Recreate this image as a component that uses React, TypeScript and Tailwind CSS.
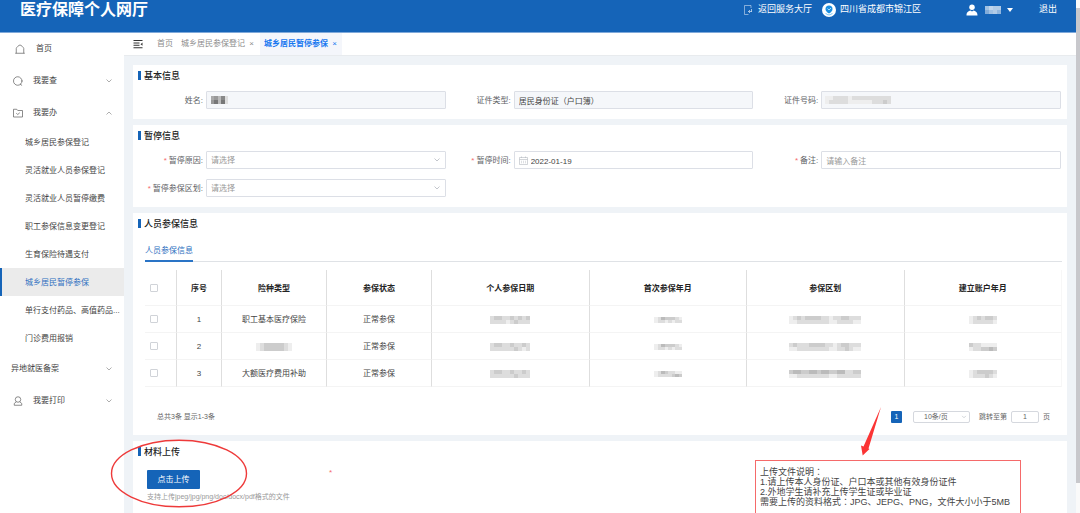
import { useState, type ReactNode } from 'react'

const COVERAGE = [
  { id: 1, type: '职工基本医疗保险', status: '正常参保', date: ['dccddcdcdc', 'ddddedcddd'], first: ['edbcccde', 'eddededd'], area: ['edcdccccddeddccddd', 'eeddddddddeeddddee'], account: ['edcdccd', 'eddddde'] },
  { id: 2, type: '', status: '正常参保', date: ['dccddcddcd', 'ddddddcded'], first: ['edbcccde', 'eddededd'], area: ['dcdddccccddedccddd', 'eeddddddddeeddcdee'], account: ['cddeeee', 'eddccbc'] },
  { id: 3, type: '大额医疗费用补助', status: '正常参保', date: ['dccddcddcd', 'ddddddcddd'], first: ['edbcddee', 'eddddcbc'], area: ['cbbccbbcbbccbbddcc', 'eeddddddddeedddddd'], account: ['edccccd', 'edddcde'] },
]

const SUB_MENU = [
  '城乡居民参保登记',
  '灵活就业人员参保登记',
  '灵活就业人员暂停缴费',
  '职工参保信息变更登记',
  '生育保险待遇支付',
  '城乡居民暂停参保',
  '单行支付药品、高值药品...',
  '门诊费用报销',
]

const ACTIVE_MENU = '城乡居民暂停参保'

// privacy mosaic: each character is the grey level of one block
function Mosaic({ rows, className, tint }: { rows: string[]; className?: string; tint?: string }) {
  const cols = rows[0].length
  return (
    <svg className={className} viewBox={`0 0 ${cols} ${rows.length}`} preserveAspectRatio="none" shapeRendering="crispEdges" aria-hidden="true">
      {rows.map((row, y) =>
        row.split('').map((c, x) => (
          <rect key={`${x}-${y}`} x={x} y={y} width="1" height="1" fill={tint || `#${c}${c}${c}`} fillOpacity={tint ? parseInt(c, 16) / 15 : 1} />
        ))
      )}
    </svg>
  )
}

function Chevron({ className, up }: { className?: string; up?: boolean }) {
  return (
    <svg className={className} viewBox="0 0 8 8" fill="none" stroke="currentColor" strokeWidth={0.8}>
      <path d={up ? 'M1.5 5.5 L4 3 L6.5 5.5' : 'M1.5 2.5 L4 5 L6.5 2.5'} />
    </svg>
  )
}

function HomeIcon() {
  return (
    <svg className="w-[10px] h-[10px]" viewBox="0 0 20 20" fill="none" stroke="currentColor" strokeWidth={1.5} strokeLinejoin="round">
      <path d="M0.500 18.500 H19.500 M2.500 18.500 V9 C2.500 7 8 2 10 2 C12 2 17.500 7 17.500 9 V18.500" />
    </svg>
  )
}

function SearchIcon() {
  return (
    <svg className="w-[10px] h-[10px]" viewBox="0 0 20 20" fill="none" stroke="currentColor" strokeWidth={1.5} strokeLinecap="round">
      <circle cx="9.500" cy="10" r="8.500" />
      <path d="M14.500 16.500 L17.500 18.500" />
    </svg>
  )
}

function FolderIcon() {
  return (
    <svg className="w-[10px] h-[10px]" viewBox="0 0 20 20" fill="none" stroke="currentColor" strokeWidth={1.5} strokeLinejoin="round">
      <path d="M1 2.500 H7.500 L9.500 5 H19 V18 H1 Z" />
      <path d="M6.500 10.500 L9.500 13 L13.500 9.500" />
    </svg>
  )
}

function PersonIcon() {
  return (
    <svg className="w-[10px] h-[10px]" viewBox="0 0 20 20" fill="none" stroke="currentColor" strokeWidth={1.5} strokeLinejoin="round">
      <circle cx="10" cy="7" r="5.500" />
      <path d="M6.500 11.500 L2.500 15 V18.500 H17.500 V15 L13.500 11.500" />
    </svg>
  )
}

function MenuGroup({ icon, label, open }: { icon?: ReactNode; label: string; open?: boolean }) {
  return (
    <button type="button" aria-expanded={!!open} className={`flex h-8 w-full items-center gap-[10px] pr-[11px] pt-[2px] text-left ${icon ? 'pl-[13px]' : 'pl-[11px]'}`}>
      {icon && <span className="text-[#666]">{icon}</span>}
      <span className="flex-1">{label}</span>
      <Chevron up={open} className="w-2 h-2 text-[#999]" />
    </button>
  )
}

function Sidebar() {
  return (
    <nav className="w-[124px] shrink-0 bg-white text-[8px] leading-3 text-[#444]">
      <a href="#home" className="flex h-8 items-center gap-[11px] pl-[15px] pt-[2px]">
        <span className="text-[#666]"><HomeIcon /></span>
        首页
      </a>
      <MenuGroup icon={<SearchIcon />} label="我要查" />
      <MenuGroup icon={<FolderIcon />} label="我要办" open />
      <ul>
        {SUB_MENU.map((item) => (
          <li key={item}>
            <a
              href="#menu"
              className={`block h-7 whitespace-nowrap border-l-2 pl-[23px] leading-[30px] ${item === ACTIVE_MENU ? 'border-[#1564b8] bg-[#ebebeb] text-[#2e6fc0]' : 'border-transparent'}`}
            >
              {item}
            </a>
          </li>
        ))}
      </ul>
      <MenuGroup label="异地就医备案" />
      <MenuGroup icon={<PersonIcon />} label="我要打印" />
    </nav>
  )
}

function Header() {
  return (
    <header className="relative z-10 h-8 shrink-0 bg-[#1564b8] text-white shadow-[0_1px_0_#7fa9da]">
      <div className="flex h-5 items-center pl-5 pr-[19px] text-[9px]">
        <h1 className="flex-1 text-[16px] leading-5 font-bold">医疗保障个人网厅</h1>
        <a href="#hall" className="flex items-center gap-[6px]">
          <svg className="w-2 h-[10px]" viewBox="0 0 16 20" fill="none" stroke="currentColor" strokeWidth={1.2}>
            <path d="M14 6 V1 H1 V19 H9" opacity="0.8" />
            <path d="M15 8 V14 M12 10 L9 13 L12 16 M9 13 H15" />
          </svg>
          返回服务大厅
        </a>
        <div className="ml-[10px] flex items-center gap-1">
          <svg className="w-[14px] h-[14px]" viewBox="0 0 28 28">
            <circle cx="14" cy="14" r="14" fill="#fff" />
            <path d="M14 21 C9 18 7 15 7 12 A7 7 0 0 1 21 12 C21 15 19 18 14 21 Z" fill="#1c8fe0" />
            <path d="M11 11 L14 14 L18 10" fill="none" stroke="#a6dcff" strokeWidth="2" />
            <path d="M7 20 C10 25 18 25 21 20" fill="none" stroke="#52b5f2" strokeWidth="1.5" />
          </svg>
          四川省成都市锦江区
        </div>
        <button type="button" aria-label="用户" className="ml-[45px] flex items-center">
          <svg className="w-3 h-3" viewBox="0 0 24 24" fill="currentColor">
            <circle cx="12" cy="6.500" r="5.500" />
            <path d="M1 23 C1 16 5 14.500 9 13 L12 15 L15 13 C19 14.500 23 16 23 23 Z" />
          </svg>
          <Mosaic rows={['9baa', '79a8']} tint="#ffffff" className="ml-[7px] w-4 h-2" />
          <svg className="ml-[6px] w-[6px] h-[4px]" viewBox="0 0 6 4" fill="currentColor">
            <path d="M0 0 H6 L3 4 Z" />
          </svg>
        </button>
        <a href="#logout" className="ml-[26px]">退出</a>
      </div>
    </header>
  )
}

function TabBar() {
  return (
    <div className="flex h-6 items-center border-b border-[#e8ebee] bg-white pl-[9px] text-[8px] text-[#8c8c8c]">
      <button type="button" aria-label="收起菜单" className="text-[#333]">
        <svg className="w-[10px] h-[10px]" viewBox="0 0 20 20" fill="none" stroke="currentColor" strokeWidth={2}>
          <path d="M1 3 H19 M1 8 H13 M1 12.500 H13 M1 17.500 H19" />
          <path d="M19 7 V13.500 L15 10.250 Z" fill="currentColor" stroke="none" />
        </svg>
      </button>
      <a href="#home" className="ml-[14px]">首页</a>
      <a href="#register" className="ml-2">城乡居民参保登记</a>
      <button type="button" aria-label="关闭" className="ml-[3px] w-[7px]">×</button>
      <div className="ml-[5px] flex h-full items-center gap-[3px] bg-[#f4f6fb] px-1 text-[#1677f0]">
        <a href="#suspend" className="font-bold">城乡居民暂停参保</a>
        <button type="button" aria-label="关闭" className="w-[7px]">×</button>
      </div>
    </div>
  )
}

function Card({ title, className, children }: { title: string; className?: string; children: ReactNode }) {
  return (
    <section className={`bg-white ${className || ''}`}>
      <h2 className="flex h-[21px] items-center gap-[3px] pl-[5px] text-[9px] font-medium text-[#222]">
        <span className="w-[3px] h-[9px] bg-[#1564b8]" />
        {title}
      </h2>
      {children}
    </section>
  )
}

function Field({ id, label, required, children }: { id: string; label: string; required?: boolean; children: ReactNode }) {
  return (
    <div className="flex h-[18px] items-center">
      <label htmlFor={id} className="w-[68px] shrink-0 pr-[3px] pt-[2px] text-right text-[#606266]">
        {required && <span className="mr-[2px] text-[#f56c6c]">*</span>}
        {label}:
      </label>
      <div className="relative h-full flex-1">{children}</div>
    </div>
  )
}

const inputClass = 'block h-full w-full appearance-none rounded-[1px] border border-[#dcdfe6] bg-white px-1 pt-[2px] text-[#444] outline-none placeholder:text-[#999]'
const disabledClass = 'block h-full w-full rounded-[1px] border border-[#dcdfe6] bg-[#f5f7fa] px-1 text-[#444]'

function EmptySelect({ id }: { id: string }) {
  return (
    <>
      <select id={id} defaultValue="" className={`${inputClass} text-[#999]`}>
        <option value="">请选择</option>
      </select>
      <Chevron className="pointer-events-none absolute right-[5px] top-[5px] w-2 h-2 text-[#b4b8bf]" />
    </>
  )
}

function Checkbox({ label }: { label: string }) {
  return (
    <input type="checkbox" aria-label={label} className="block w-2 h-2 appearance-none rounded-[1px] border border-[#d0d3d8] bg-white checked:bg-[#1564b8]" />
  )
}

function CoverageTable() {
  const box = 'border-b border-r border-b-[#f4f4f4] border-r-[#dedede] last:border-r-[#f7f7f7]'
  const cell = `${box} px-0 pb-0 pt-[2px]`
  return (
    <table className="mt-2 w-full table-fixed border-separate border-spacing-0 text-center text-[#444]">
      <thead>
        <tr className="h-9 text-[#222]">
          <th className={`${box} w-8 p-0`}><div className="pl-[5px]"><Checkbox label="全选" /></div></th>
          <th className={`${cell} w-[45px]`}>序号</th>
          <th className={`${cell} w-[105px]`}>险种类型</th>
          <th className={`${cell} w-[105px]`}>参保状态</th>
          <th className={cell}>个人参保日期</th>
          <th className={cell}>首次参保年月</th>
          <th className={cell}>参保区划</th>
          <th className={cell}>建立账户年月</th>
        </tr>
      </thead>
      <tbody>
        {COVERAGE.map((row) => (
          <tr key={row.id} className="h-[27px]">
            <td className={`${box} p-0`}><div className="pl-[5px]"><Checkbox label={`选择第${row.id}行`} /></div></td>
            <td className={cell}>{row.id}</td>
            <td className={cell}>
              {row.type || <Mosaic rows={['edcccccde', 'edcccccde']} className="mx-auto w-9 h-2" />}
            </td>
            <td className={cell}>{row.status}</td>
            <td className={cell}><Mosaic rows={row.date} className="mx-auto w-10 h-2" /></td>
            <td className={cell}><Mosaic rows={row.first} className="mx-auto w-7 h-[6px]" /></td>
            <td className={cell}><Mosaic rows={row.area} className="mx-auto w-[72px] h-2" /></td>
            <td className={cell}><Mosaic rows={row.account} className="mx-auto w-7 h-2" /></td>
          </tr>
        ))}
      </tbody>
    </table>
  )
}

function Pagination() {
  return (
    <div className="mt-6 flex h-3 items-center pl-6 pr-[17px] text-[7px] text-[#666]">
      <p className="flex-1">总共3条 显示1-3条</p>
      <button type="button" className="w-[11px] h-3 rounded-[1px] bg-[#1564b8] text-white">1</button>
      <div className="relative ml-[11px] w-[57px] h-3">
        <select aria-label="每页条数" className="block h-full w-full appearance-none rounded-[2px] border border-[#d5d8de] bg-white pl-[10px] leading-[10px]">
          <option>10条/页</option>
        </select>
        <Chevron className="pointer-events-none absolute right-[3px] top-[3px] w-[6px] h-[6px] text-[#b4b8bf]" />
      </div>
      <label htmlFor="page" className="ml-[9px]">跳转至第</label>
      <input id="page" defaultValue="1" className="mx-1 w-7 h-3 rounded-[2px] border border-[#d5d8de] bg-white text-center" />
      页
    </div>
  )
}

function UploadNote() {
  return (
    <div className="absolute right-[46px] top-[19px] w-[266px] h-[60px] border border-[#f56a6a] bg-white pl-1 pt-[6px] text-[9px] leading-[10px] whitespace-nowrap text-[#444]">
      <p>上传文件说明<Colon /></p>
      <p>1.请上传本人身份证、户口本或其他有效身份证件</p>
      <p>2.外地学生请补充上传学生证或毕业证</p>
      <p>需要上传的资料格式<Colon />JPG、JEPG、PNG，文件大小小于5MB</p>
      <svg className="absolute left-[104px] -top-[54px] w-[22px] h-[50px]" viewBox="0 0 22 50" fill="#fb3434">
        <path d="M21 0 L8.500 41.500 L9.500 42 L2.700 48.500 L1 38.500 L3.500 39.500 Z" />
      </svg>
    </div>
  )
}

// full-width colon centred in its box
function Colon() {
  return <span lang="zh-TW" className="font-['Noto_Sans_CJK_TC',sans-serif]">：</span>
}

export default function App() {
  const [remark, setRemark] = useState('')
  const [date, setDate] = useState('2022-01-19')

  return (
    <div lang="zh-CN" className="flex h-screen overflow-hidden bg-white font-['Liberation_Sans','Noto_Sans_CJK_SC',sans-serif]">
      <div className="flex min-w-0 flex-1 flex-col">
        <Header />
        <div className="flex min-h-0 flex-1">
          <Sidebar />
          <main className="min-w-0 flex-1 bg-[#eff3f7] text-[8px] leading-3">
            <TabBar />
            <div className="flex flex-col gap-[6px] p-[9px]">
              <Card title="基本信息">
                <div className="grid grid-cols-3 gap-y-[10px] pl-[5px] pr-[6px] pt-[5px] pb-[10px]">
                  <Field id="name" label="姓名">
                    <input id="name" disabled className={disabledClass} />
                    <Mosaic rows={['a9b8d', '97b7d']} className="absolute left-[5px] top-[5px] w-[17px] h-2" />
                  </Field>
                  <Field id="cert" label="证件类型">
                    <input id="cert" disabled value="居民身份证（户口簿）" lang="zh-TW" className={`${disabledClass} font-['Liberation_Sans','Noto_Sans_CJK_TC',sans-serif]`} />
                  </Field>
                  <Field id="number" label="证件号码">
                    <input id="number" disabled className={disabledClass} />
                    <Mosaic rows={['eeddddedddddddddd', 'edddddeeeeeedddcd']} className="absolute left-1 top-[5px] w-[66px] h-2" />
                  </Field>
                </div>
              </Card>

              <Card title="暂停信息">
                <div className="grid grid-cols-3 gap-y-[10px] pl-[5px] pr-[6px] pt-[5px] pb-[10px]">
                  <Field id="reason" label="暂停原因" required>
                    <EmptySelect id="reason" />
                  </Field>
                  <Field id="date" label="暂停时间" required>
                    <input id="date" value={date} onChange={(e) => setDate(e.target.value)} className={`${inputClass} pl-4`} />
                    <svg className="absolute left-[5px] top-[5px] w-[9px] h-[9px] text-[#b4b8bf]" viewBox="0 0 18 18" fill="none" stroke="currentColor" strokeWidth={1.2}>
                      <path d="M1 3 H17 V17 H1 Z M1 7 H17 M5 1 V4 M13 1 V4" />
                      <path d="M4 10.500 H14 M4 13.500 H14" strokeDasharray="2 2" />
                    </svg>
                  </Field>
                  <Field id="remark" label="备注" required>
                    <input id="remark" value={remark} onChange={(e) => setRemark(e.target.value)} placeholder="请输入备注" className={inputClass} />
                  </Field>
                  <Field id="region" label="暂停参保区划" required>
                    <EmptySelect id="region" />
                  </Field>
                </div>
              </Card>

              <Card title="人员参保信息" className="pb-3">
                <div className="pl-3 pr-[5px]">
                  <div className="mt-[6px] flex h-[22px] border-b border-[#dfe2e6]">
                    <a href="#coverage" className="flex h-[22px] items-center border-b-2 border-[#2a74c6] pt-[2px] text-[#2e6fc0]">人员参保信息</a>
                  </div>
                  <CoverageTable />
                </div>
                <Pagination />
              </Card>

              <Card title="材料上传" className="relative h-[120px]">
                <div className="flex items-start pl-[14px] pt-2">
                  <button type="button" className="w-[53px] h-[19px] rounded-[1px] bg-[#1564b8] text-white">点击上传</button>
                  <span className="ml-[129px] leading-[6px] text-[#f56c6c]">*</span>
                </div>
                <p className="mt-[2px] pl-[14px] text-[7px] text-[#999]">支持上传jpeg/jpg/png/doc/docx/pdf格式的文件</p>
                {/* hand-drawn ring around the upload button */}
                <svg className="pointer-events-none absolute -left-[23px] -top-[2px] w-[138px] h-[69px]" viewBox="0 0 138 69" fill="none" stroke="#ee3a3a" strokeWidth={1.4}>
                  <ellipse cx="69" cy="34.500" rx="67.500" ry="33.300" />
                </svg>
                <UploadNote />
              </Card>
            </div>
          </main>
        </div>
      </div>
      {/* scrollbar */}
      <div className="w-1 shrink-0 bg-[#fafafa] pt-2">
        <div className="h-[94%] bg-[#c8c8cc]" />
      </div>
    </div>
  )
}
